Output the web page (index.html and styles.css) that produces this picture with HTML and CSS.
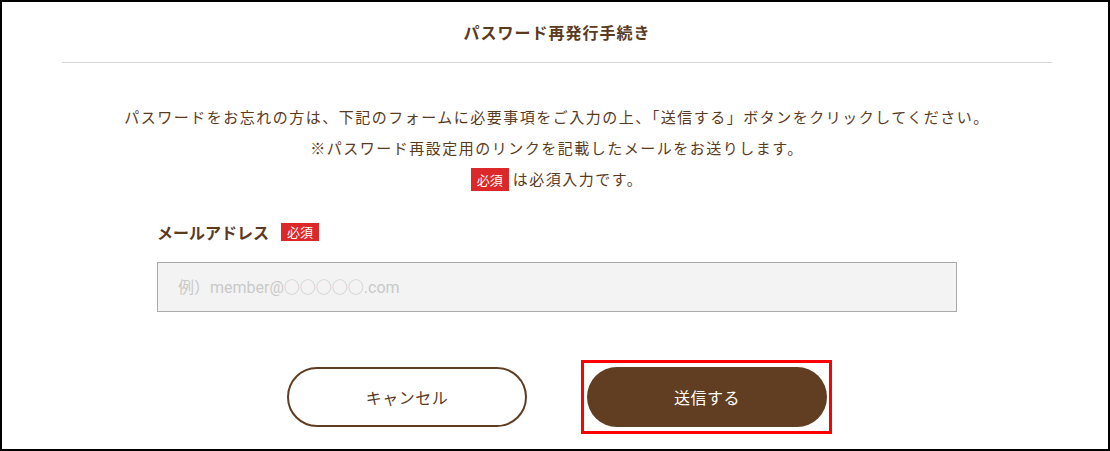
FILE: index.html
```html
<!DOCTYPE html>
<html lang="ja">
<head>
<meta charset="utf-8">
<title>パスワード再発行手続き</title>
<link rel="stylesheet" href="styles.css">
</head>
<body>
<div class="frame">
  <header class="head">
    <h1 class="title">パスワード再発行手続き</h1>
  </header>
  <div class="rule"></div>
  <main class="content">
    <p class="lead">パスワードをお忘れの方は、下記のフォームに必要事項をご入力の上、「送信する」ボタンをクリックしてください。<br>※パスワード再設定用のリンクを記載したメールをお送りします。<br><span class="badge badge-lg">必須</span>は必須入力です。</p>
    <div class="field">
      <div class="label-row">
        <span class="label">メールアドレス</span>
        <span class="badge badge-sm">必須</span>
      </div>
      <input class="input" type="email" placeholder="例）member@○○○○○.com">
    </div>
    <div class="actions">
      <button class="btn btn-cancel" type="button">キャンセル</button>
      <div class="focus-ring">
        <button class="btn btn-submit" type="submit">送信する</button>
      </div>
    </div>
  </main>
</div>
</body>
</html>
```

FILE: styles.css
```css
* {
  box-sizing: border-box;
}

html, body {
  margin: 0;
  padding: 0;
  background: #fff;
}

body {
  font-family: "Noto Sans CJK JP", "Noto Sans", sans-serif;
  color: #5b3a1e;
}

.frame {
  width: 1110px;
  height: 451px;
  border: 2px solid #000;
  background: #fff;
  overflow: hidden;
}

.head {
  height: 60px;
  display: flex;
  align-items: center;
  justify-content: center;
  padding: 0 56px 0 60px;
}

.title {
  margin: 0;
  font-size: 16px;
  font-weight: 700;
  letter-spacing: 1px;
  line-height: 24px;
  color: #5b3a1e;
}

.rule {
  height: 1px;
  background: #d6d6d6;
  margin: 0 56px 0 60px;
}

.content {
  padding: 0 56px 0 60px;
}

.lead {
  margin: 38px 0 0;
  text-align: center;
  font-size: 15px;
  line-height: 31px;
  letter-spacing: 1.5px;
  color: #5b3a1e;
}

.badge {
  display: inline-flex;
  align-items: center;
  justify-content: center;
  width: 38px;
  background: #dc2828;
  color: #fff;
  font-size: 13px;
  letter-spacing: 0;
  font-weight: 400;
  vertical-align: middle;
}

.badge-lg {
  height: 23px;
  line-height: 23px;
  margin-right: 4px;
  position: relative;
  top: -1px;
}

.badge-sm {
  height: 18px;
  line-height: 18px;
  margin-left: 12px;
}

.field {
  width: 800px;
  margin: 26px auto 0;
}

.label-row {
  height: 24px;
  display: flex;
  align-items: center;
}

.label {
  font-size: 16px;
  font-weight: 700;
  color: #5b3a1e;
  line-height: 24px;
}

.input {
  display: block;
  width: 800px;
  height: 50px;
  margin-top: 18px;
  border: 1px solid #aaaaaa;
  background: #f3f3f3;
  padding: 0 20px;
  font-family: Roboto, "Noto Sans CJK JP", sans-serif;
  font-size: 16px;
  color: #333;
  outline: none;
}

.input::placeholder {
  color: #c9c9c9;
}

.actions {
  margin-top: 48px;
  display: flex;
  justify-content: center;
  align-items: center;
  gap: 54px;
  padding-left: 5px;
}

.btn {
  width: 240px;
  height: 60px;
  border-radius: 30px;
  font-family: "Noto Sans CJK JP", "Noto Sans", sans-serif;
  font-size: 16px;
  letter-spacing: 0.5px;
  cursor: pointer;
  padding: 0;
}

.btn-cancel {
  background: #fff;
  border: 2px solid #5e3d22;
  color: #5b3a1e;
}

.focus-ring {
  border: 3px solid #ff0000;
  padding: 4px 2px 4px 3px;
  display: flex;
}

.btn-submit {
  background: #613e22;
  border: none;
  color: #fff;
}
```
